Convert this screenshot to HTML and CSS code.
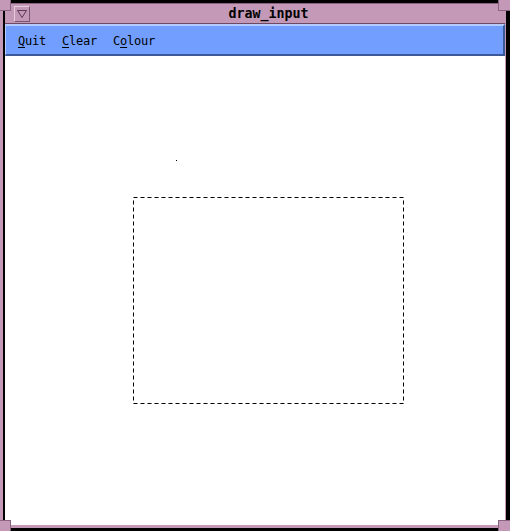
FILE: index.html
```html
<!DOCTYPE html>
<html>
<head>
<meta charset="utf-8">
<title>draw_input</title>
<link rel="stylesheet" href="styles.css">
</head>
<body>
<div class="screen">
  <div class="window">
    <div class="inner">
      <div class="titlebar">
        <div class="menu-btn">
          <svg width="10" height="8" viewBox="0 0 10 8"><path d="M0.5 0.5 H9.5 L5 7.5 Z" fill="none" stroke="#5a3b52" stroke-width="1"/></svg>
        </div>
        <div class="title">draw_input</div>
      </div>
      <div class="menubar">
        <span class="item"><span class="mn">Q</span>uit</span>
        <span class="item"><span class="mn">C</span>lear</span>
        <span class="item">C<span class="mn">o</span>lour</span>
      </div>
      <div class="canvas">
        <svg class="drawing" width="498" height="469" viewBox="0 0 498 469">
          <rect x="128.5" y="141.5" width="270" height="206" fill="none" stroke="#000" stroke-width="1" stroke-dasharray="4 3"/>
          <rect x="171" y="104" width="1" height="1" fill="#000"/>
        </svg>
      </div>
    </div>
  </div>
  <div class="corner tl"></div>
  <div class="corner tr"></div>
  <div class="corner bl"></div>
  <div class="corner br"></div>
</div>
</body>
</html>
```

FILE: styles.css
```css
html, body {
  margin: 0;
  padding: 0;
  background: #000;
}

.screen {
  position: relative;
  width: 510px;
  height: 531px;
  background: #000;
  overflow: hidden;
}

.window {
  margin-top: 3px;
  width: 506px;
  height: 525px;
  box-sizing: border-box;
  background: #c499b7;
  padding: 0 1px 3px 3px;
  display: flex;
  flex-direction: column;
}

.inner {
  flex: 1;
  display: flex;
  flex-direction: column;
  border-left: 2px solid #000;
  min-height: 0;
}

.titlebar {
  height: 19px;
  border-top: 1px solid #8a6380;
  border-bottom: 1px solid #6d4a64;
  background: #c499b7;
  display: flex;
  align-items: center;
  padding-left: 9px;
  padding-right: 8px;
}

.menu-btn {
  width: 14px;
  height: 14px;
  border: 1px solid;
  border-color: #e6cbdd #7a5570 #7a5570 #e6cbdd;
  display: flex;
  align-items: center;
  justify-content: center;
  box-sizing: content-box;
}

.menu-btn svg {
  display: block;
}

.title {
  flex: 1;
  text-align: center;
  font-family: "DejaVu Sans Mono", monospace;
  font-weight: bold;
  font-size: 13.3px;
  color: #000;
  line-height: 19px;
  padding-left: 10px;
}

.menubar {
  height: 26px;
  border-top: 2px solid #b6ccff;
  border-left: 1px solid #b6ccff;
  border-bottom: 2px solid #3c5a98;
  border-right: 2px solid #3c5a98;
  background: #719eff;
  display: flex;
  align-items: center;
  padding-left: 4px;
  padding-top: 2px;
  box-sizing: content-box;
}

.item {
  font-family: "DejaVu Sans Mono", monospace;
  font-size: 12px;
  letter-spacing: -0.22px;
  color: #000;
  padding: 0 8px;
  line-height: 16px;
}

.mn {
  text-decoration: underline;
  text-underline-offset: 2px;
  text-decoration-thickness: 1px;
}

.canvas {
  flex: 1;
  position: relative;
  background: #fff;
  min-height: 0;
}

.drawing {
  position: absolute;
  left: 0;
  top: 0;
  display: block;
}

.corner {
  position: absolute;
  width: 10px;
  height: 10px;
  background: #c499b7;
}

.corner.tl {
  left: 0;
  top: 0;
  border-right: 1px solid #8a6380;
  border-bottom: 1px solid #8a6380;
}

.corner.tr {
  right: 0;
  top: 0;
  width: 11px;
  border-left: 1px solid #8a6380;
  border-bottom: 1px solid #8a6380;
}

.corner.bl {
  left: 0;
  bottom: 0;
  border-top: 1px solid #8a6380;
  border-right: 1px solid #8a6380;
}

.corner.br {
  right: 0;
  bottom: 0;
  width: 11px;
  border-top: 1px solid #8a6380;
  border-left: 1px solid #8a6380;
}
```
